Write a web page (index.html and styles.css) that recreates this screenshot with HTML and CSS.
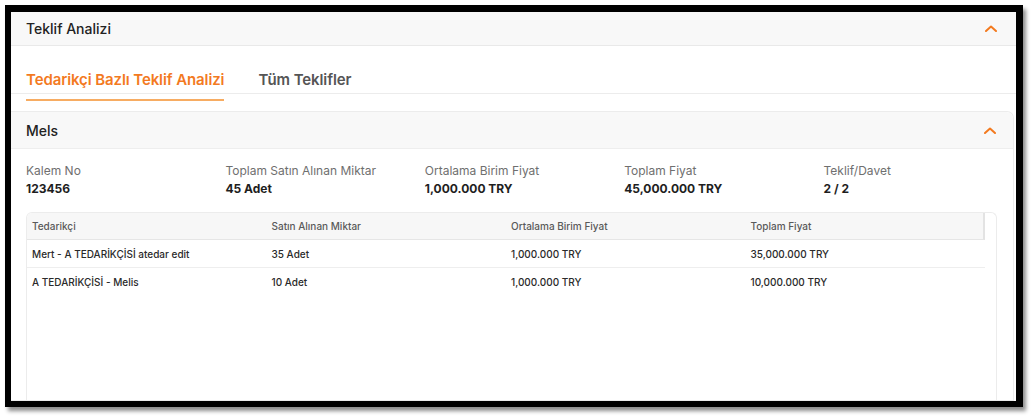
FILE: index.html
```html
<!DOCTYPE html>
<html lang="tr">
<head>
<meta charset="utf-8">
<title>Teklif Analizi</title>
<link rel="stylesheet" href="styles.css">
</head>
<body>
<div class="frame">
  <div class="screen">
    <div class="panel-head">
      <span class="panel-title">Teklif Analizi</span>
      <svg class="chev" width="12" height="7" viewBox="0 0 12 7"><path d="M1 6 L6 1.5 L11 6" fill="none" stroke="#f37a1f" stroke-width="2" stroke-linecap="round" stroke-linejoin="round"/></svg>
    </div>
    <div class="tabs">
      <span class="tab active">Tedarikçi Bazlı Teklif Analizi</span>
      <span class="tab">Tüm Teklifler</span>
    </div>
    <div class="tab-ink"></div>
    <div class="card">
      <div class="card-head">
        <span class="card-title">Mels</span>
        <svg class="chev" width="12" height="7" viewBox="0 0 12 7"><path d="M1 6 L6 1.5 L11 6" fill="none" stroke="#f37a1f" stroke-width="2" stroke-linecap="round" stroke-linejoin="round"/></svg>
      </div>
      <div class="card-body">
        <div class="stats">
          <div class="stat"><div class="label">Kalem No</div><div class="value">123456</div></div>
          <div class="stat"><div class="label">Toplam Satın Alınan Miktar</div><div class="value">45 Adet</div></div>
          <div class="stat"><div class="label">Ortalama Birim Fiyat</div><div class="value">1,000.000 TRY</div></div>
          <div class="stat"><div class="label">Toplam Fiyat</div><div class="value">45,000.000 TRY</div></div>
          <div class="stat"><div class="label">Teklif/Davet</div><div class="value">2 / 2</div></div>
        </div>
        <div class="table">
          <div class="thead">
            <div class="th">Tedarikçi</div>
            <div class="th">Satın Alınan Miktar</div>
            <div class="th">Ortalama Birim Fiyat</div>
            <div class="th">Toplam Fiyat</div>
          </div>
          <div class="tr">
            <div class="td">Mert - A TEDARİKÇİSİ atedar edit</div>
            <div class="td">35 Adet</div>
            <div class="td">1,000.000 TRY</div>
            <div class="td">35,000.000 TRY</div>
          </div>
          <div class="tr">
            <div class="td">A TEDARİKÇİSİ - Melis</div>
            <div class="td">10 Adet</div>
            <div class="td">1,000.000 TRY</div>
            <div class="td">10,000.000 TRY</div>
          </div>
        </div>
      </div>
    </div>
  </div>
</div>
</body>
</html>
```
FILE: styles.css
```css
* { box-sizing: border-box; }
html, body { margin: 0; padding: 0; background: #fff; }
body {
  font-family: Inter, "Noto Sans", "Liberation Sans", sans-serif;
  color: #222;
  width: 1034px;
  height: 420px;
  overflow: hidden;
}
.frame {
  margin: 5px 0 0 5px;
  width: 1018px;
  height: 402px;
  border-style: solid;
  border-color: #000;
  border-width: 7px 7px 6px 6px;
  box-shadow: 3px 4px 4px rgba(0,0,0,0.45);
  overflow: hidden;
  background: #fff;
}
.screen {
  height: 100%;
  display: flex;
  flex-direction: column;
}
.panel-head {
  height: 34px;
  flex: none;
  background: #f8f8f8;
  border-bottom: 1px solid #e9e9e9;
  display: flex;
  align-items: center;
  justify-content: space-between;
  padding: 0 19px 0 15px;
}
.panel-title { font-size: 14px; font-weight: 500; color: #222; }
.chev { display: block; }
.tabs {
  flex: none;
  height: 48px;
  display: flex;
  align-items: flex-end;
  gap: 34px;
  padding: 0 15px 4px;
  border-bottom: 1px solid #ececec;
}
.tab { font-size: 15px; font-weight: 600; color: #555; letter-spacing: -0.1px; line-height: 18px; }
.tab.active { color: #f37a1f; }
.tab-ink {
  flex: none;
  margin: 5px 0 0 15px;
  width: 198px;
  height: 2px;
  background: #f7ac62;
}
.card {
  flex: 1;
  margin: 10px 2px 0 0;
  border: 1px solid #ececec;
  border-left: none;
  border-radius: 0 7px 0 0;
  display: flex;
  flex-direction: column;
}
.card-head {
  height: 37px;
  flex: none;
  background: #f8f8f8;
  border-bottom: 1px solid #eeeeee;
  border-radius: 0 7px 0 0;
  display: flex;
  align-items: center;
  justify-content: space-between;
  padding: 0 17px 0 15px;
}
.card-title { font-size: 14px; font-weight: 500; color: #222; }
.card-body {
  flex: 1;
  padding: 14px 15px 0 15px;
  display: flex;
  flex-direction: column;
}
.stats {
  display: grid;
  grid-template-columns: repeat(5, 199.4px);
}
.label { font-size: 12px; color: #6f6f6f; line-height: 16px; }
.value { font-size: 12px; font-weight: 700; color: #1e1e1e; line-height: 16px; margin-top: 2px; }
.table {
  flex: 1;
  margin-top: 15px;
  width: 971px;
  border: 1px solid #ececec;
  border-bottom: none;
  border-radius: 6px 6px 0 0;
  overflow: hidden;
}
.thead, .tr {
  display: grid;
  grid-template-columns: repeat(4, 239.5px);
  width: 958px;
}
.thead {
  height: 27px;
  background: #f7f7f7;
  border-bottom: 1px solid #e6e6e6;
  border-right: 2px solid #e3e3e3;
  align-items: center;
}
.tr {
  height: 28px;
  border-bottom: 1px solid #eeeeee;
  align-items: center;
}
.tr:last-child { border-bottom: none; }
.th { font-size: 10px; color: #5a5a5a; padding-left: 5px; font-weight: 500; }
.td { font-size: 10px; color: #2a2a2a; padding-left: 5px; font-weight: 500; }
```
